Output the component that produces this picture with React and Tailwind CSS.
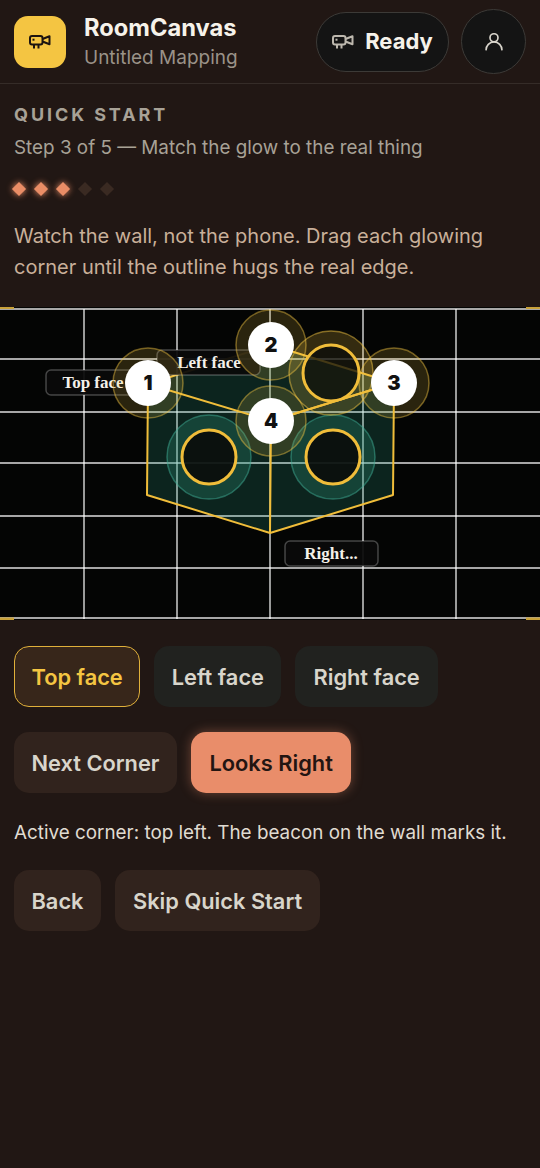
import React from 'react'

const Projector = ({ className }) => (
  <svg viewBox="0 0 22 14" fill="none" stroke="currentColor" strokeWidth="2" strokeLinejoin="round" className={className}>
    <rect x="1" y="1" width="12.5" height="8.5" rx="2" />
    <path d="M13.5 4L20.5 1.2V9.3L13.5 6.5" />
    <path d="M5 9.5V13.5M9.5 9.5V13.5" />
    <rect x="3.5" y="3.7" width="2" height="2" fill="currentColor" stroke="none" />
  </svg>
)

const User = ({ className }) => (
  <svg viewBox="0 0 24 24" fill="none" stroke="currentColor" strokeWidth="2" strokeLinecap="round" className={className}>
    <circle cx="12" cy="7.5" r="4.8" />
    <path d="M2.5 22c0-5 4-9.5 9.5-9.5s9.5 4.500 9.500 9.500" />
  </svg>
)

const Handle = ({ x, y, n }) => (
  <g>
    <circle cx={x} cy={y} r="35" fill="#f4c542" fillOpacity="0.16" stroke="#f4c542" strokeOpacity="0.45" strokeWidth="1.5" />
    <circle cx={x} cy={y} r="23" fill="#fff" />
    <text x={x} y={y + 7} textAnchor="middle" fontFamily="Inter, sans-serif" fontWeight="900" fontSize="20" fill="#111">{n}</text>
  </g>
)

const Beacon = ({ x, y, teal, r }) => (
  <g>
    <circle cx={x} cy={y} r="42" fill={teal ? '#2f9e85' : '#f4c542'} fillOpacity={teal ? 0.25 : 0.2} stroke={teal ? '#3fae95' : '#f4c542'} strokeOpacity="0.5" strokeWidth="1.5" />
    <circle cx={x} cy={y} r={r} fill="#0a0c0a" fillOpacity={teal ? 0.9 : 0.75} stroke="#f0bd3a" strokeWidth="3" />
  </g>
)

const Label = ({ x, y, w, text, tx }) => (
  <g>
    <rect x={x} y={y} width={w} height="25" rx="5" fill="#0a0a0a" fillOpacity="0.94" stroke="#fff" strokeOpacity="0.25" strokeWidth="1.5" />
    <text x={tx} y={y + 18} textAnchor="middle" fontFamily="'Liberation Serif', serif" fontWeight="700" fontSize="17" fill="#f4f1ea">{text}</text>
  </g>
)

const Canvas = () => {
  const xs = [84, 177, 270, 363, 456]
  const ys = [309, 359, 412, 463, 516, 568, 618]
  return (
    <svg viewBox="0 307 540 313" className="block w-full h-[313px] bg-[#040504]">
      {xs.map((x) => (
        <line key={x} x1={x} y1="309" x2={x} y2="619" stroke="#fff" strokeOpacity="0.6" strokeWidth="2" />
      ))}
      {ys.map((y) => (
        <line key={y} x1="0" y1={y} x2="540" y2={y} stroke="#fff" strokeOpacity="0.65" strokeWidth="2" />
      ))}
      <path d="M0 307.500H14M526 307.500H540M0 619H14M526 619H540" stroke="#c9a23a" strokeWidth="3" />
      <polygon points="148,384 271,345 394,383 393,495 270,533 147,495" fill="#2f9e85" fillOpacity="0.2" />
      <path d="M148 384L271 345L394 383L271 421ZM148 384L147 495L270 533L393 495L394 383M271 421L270 533" fill="none" stroke="#f0bd3a" strokeWidth="2" strokeLinejoin="round" />
      <Beacon x={209} y={457} teal r={27} />
      <Beacon x={333} y={457} teal r={27} />
      <Beacon x={331} y={373} r={28} />
      <path d="M271 421L394 383" stroke="#f0bd3a" strokeWidth="2.2" />
      <Label x={157} y={350} w={103} text="Left face" tx={209} />
      <Label x={46} y={370} w={100} text="Top face" tx={93} />
      <Label x={285} y={541} w={93} text="Right..." tx={331} />
      <Handle x={148} y={383} n="1" />
      <Handle x={271} y={345} n="2" />
      <Handle x={394} y={383} n="3" />
      <Handle x={271} y={421} n="4" />
    </svg>
  )
}

const Btn = ({ className, children }) => (
  <button className={`h-[61px] pt-[2px] rounded-[15px] text-[21.8px] font-semibold ${className}`}>{children}</button>
)

const App = () => {
  return (
    <div className="min-h-[1168px] bg-[#211714] font-['Inter',sans-serif]">
      <header className="flex items-center h-[84px] px-[14px] border-b border-[#352c28]">
        <div className="flex items-center justify-center w-[52px] h-[52px] rounded-[14px] bg-[#f4c542] text-[#1c1410]">
          <Projector className="w-[22px] h-[14px]" />
        </div>
        <div className="ml-[18px] mt-[3px]">
          <div className="text-[23.700px] leading-[30px] font-bold text-[#f6f2ea]">RoomCanvas</div>
          <div className="text-[19px] leading-[30px] text-[#9a9288]">Untitled Mapping</div>
        </div>
        <div className="ml-auto flex items-center h-[60px] w-[133px] justify-center gap-[11px] rounded-full bg-[#141414] border border-[#3c3a37]">
          <Projector className="w-[22px] h-[14px] text-[#bdb8ae]" />
          <span className="text-[22px] font-bold text-[#f6f2ea]">Ready</span>
        </div>
        <div className="ml-[12px] flex items-center justify-center w-[65px] h-[65px] rounded-full bg-[#141414] border border-[#3c3a37] text-[#d9d5cc]">
          <User className="w-[20px] h-[21px]" />
        </div>
      </header>

      <section className="px-[14px] pt-[20px] h-[223px]">
        <div className="text-[18px] leading-[22px] font-bold tracking-[2.9px] text-[#a8a297]">QUICK START</div>
        <div className="mt-[10px] text-[18.850px] leading-[24px] text-[#a8a297]">Step 3 of 5 — Match the glow to the real thing</div>
        <div className="flex gap-[12px] mt-[19px] h-[20px] items-center">
          {[0, 1, 2].map((i) => (
            <span key={i} className="w-[10px] h-[10px] rotate-45 bg-[#e98d66] shadow-[0_0_6px_#e98d66]" />
          ))}
          {[0, 1].map((i) => (
            <span key={i} className="w-[10px] h-[10px] rotate-45 bg-[#3a2a22]" />
          ))}
        </div>
        <p className="mt-[22px] text-[20px] leading-[31px] text-[#c9b09a]">
          Watch the wall, not the phone. Drag each glowing corner until the outline hugs the real edge.
        </p>
      </section>

      <Canvas />

      <div className="px-[14px] pt-[26px]">
        <div className="flex gap-[14px]">
          <Btn className="px-[16.500px] bg-[#37261a] border border-[#e0b03a] text-[#f4c542]">Top face</Btn>
          <Btn className="px-[17.500px] bg-[#21221f] text-[#d8d5cb]">Left face</Btn>
          <Btn className="px-[18px] bg-[#21221f] text-[#d8d5cb]">Right face</Btn>
        </div>
        <div className="flex gap-[14px] mt-[25px]">
          <Btn className="px-[17.500px] bg-[#31231d] text-[#d8d5cb]">Next Corner</Btn>
          <Btn className="px-[18.500px] bg-[#e98d6a] text-[#231512] shadow-[0_0_12px_rgba(233,141,106,0.4)]">Looks Right</Btn>
        </div>
        <p className="mt-[28px] text-[18.850px] leading-[24px] text-[#e0dcd2]">Active corner: top left. The beacon on the wall marks it.</p>
        <div className="flex gap-[14px] mt-[25px]">
          <Btn className="px-[17.500px] bg-[#31231d] text-[#d8d5cb]">Back</Btn>
          <Btn className="px-[18px] bg-[#31231d] text-[#d8d5cb]">Skip Quick Start</Btn>
        </div>
      </div>
    </div>
  )
}

export default App
